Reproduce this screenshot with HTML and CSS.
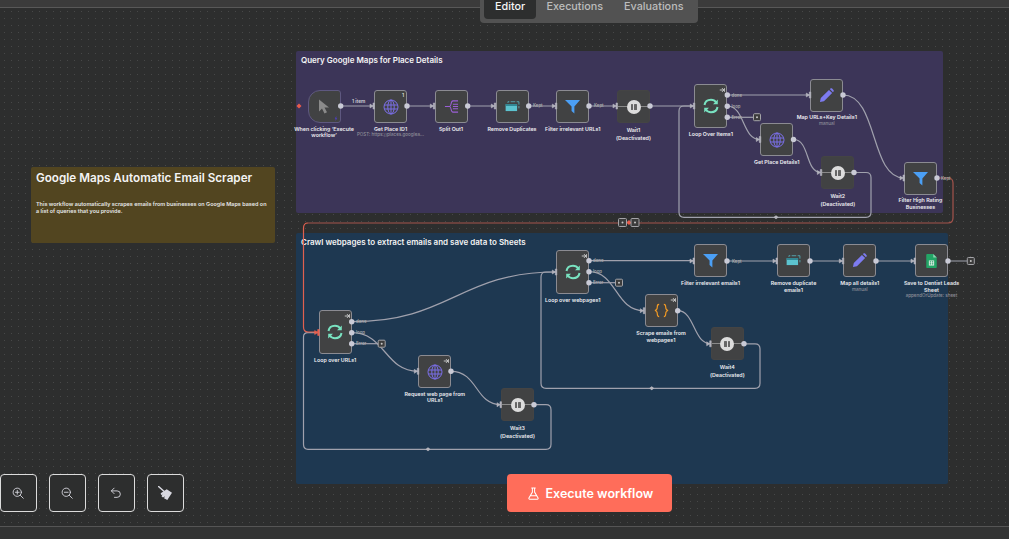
FILE: index.html
```html
<!DOCTYPE html>
<html lang="en">
<head>
<meta charset="utf-8">
<title>Workflow editor</title>
<link rel="stylesheet" href="styles.css">
</head>
<body>
<svg class="defs" width="0" height="0" aria-hidden="true">
  <defs>
    <symbol id="i-globe" viewBox="0 0 16 16"><g fill="none" stroke="currentColor" stroke-width="1"><circle cx="8" cy="8" r="7"/><ellipse cx="8" cy="8" rx="3.2" ry="7"/><path d="M8 1v14M1.2 6h13.6M1.2 10h13.6"/></g></symbol>
    <symbol id="i-filter" viewBox="0 0 16 16"><path fill="currentColor" d="M0 1h16L10 8v7.500L7 12.800V8z"/></symbol>
    <symbol id="i-pencil" viewBox="0 0 16 16"><path fill="currentColor" d="M1 15l.9-4.300L10.600 2l3.400 3.400-8.700 8.700zM11.500 1.100l.8-.6c.5-.4 1.200-.4 1.700.1l1.400 1.400c.5.500.5 1.200.1 1.700l-.6.800z"/></symbol>
    <symbol id="i-loop" viewBox="0 0 16 16"><g fill="none" stroke="currentColor" stroke-width="2"><path d="M1.500 7C2 3.800 4.500 1.800 8 1.800c2.300 0 4.100 1 5.200 2.700"/><path d="M14.500 9c-.5 3.200-3 5.200-6.500 5.200-2.300 0-4.100-1-5.200-2.700"/></g><path fill="currentColor" d="M14.800 1.500v4.800h-4.800zM1.200 14.500V9.700h4.800z"/></symbol>
    <symbol id="i-run" viewBox="0 0 8 8"><path fill="none" stroke="currentColor" stroke-width="1" d="M1 4h5M4 1.500L6.500 4 4 6.500M7.500 1.500v5"/></symbol>
  </defs>
</svg>

<div class="app">
  <header class="topbar"></header>

  <section class="sticky sticky-purple"><h2 class="sticky-title">Query Google Maps for Place Details</h2></section>
  <section class="sticky sticky-blue"><h2 class="sticky-title">Crawl webpages to extract emails and save data to Sheets</h2></section>
  <section class="sticky sticky-yellow">
    <h1 class="note-title">Google Maps Automatic Email Scraper</h1>
    <p class="note-text">This workflow automatically scrapes emails from businesses on Google Maps based on a list of queries that you provide.</p>
  </section>

  <svg class="edges" viewBox="0 0 1009 539" width="1009" height="539">
    <g class="edge">
      <path d="M341 106H374M407 106H434M468 106H495M529 106H556M589 106H617M650 106H694"/>
      <path d="M727 95H810"/>
      <path d="M727 106C745 106 742 139.500 760 139.500"/>
      <path d="M727 117.300H753"/>
      <path d="M793.500 139.500C810 139.500 805 172.500 821 172.500"/>
      <path d="M854 172.500H866Q871 172.500 871 177.500V212.300Q871 217.300 866 217.300H684Q679 217.300 679 212.300V111Q679 106 684 106H694"/>
      <path d="M843 95C878 95 870 178 904 178"/>
      <path d="M352 321.700C450 321.700 460 272 556 272"/>
      <path d="M352 332.700C385 332.700 385 371.300 418 371.300"/>
      <path d="M352 343.700H378"/>
      <path d="M451 371.300C478 371.300 475 404.700 501 404.700"/>
      <path d="M534 404.700H546Q551 404.700 551 409.700V444.300Q551 449.300 546 449.300H308Q303.500 449.300 303.500 444.300V337Q303.500 332.700 308 332.700H318"/>
      <path d="M589 260.700H694"/>
      <path d="M589 271.700C617 271.700 615 310.700 644 310.700"/>
      <path d="M589 282.700H615"/>
      <path d="M677.700 310.700C695 310.700 693 343.800 711 343.800"/>
      <path d="M744 343.800H755Q760 343.800 760 348.800V383.300Q760 388.300 755 388.300H546Q541 388.300 541 383.300V277Q541 272 546 272H556"/>
      <path d="M727 261H777M810 261H843M876 261H915M948 261H967"/>
    </g>
    <path class="edge-red-dim" d="M937 178H948Q953 178 953 183V218Q953 223 948 223H308"/>
    <path class="edge-red" d="M308 223Q303.500 223 303.500 228V327Q303.500 332 308 332H318"/>

    <g class="marks">
      <path d="M776 215.300l2.500 2-2.500 2-2.500-2zM428 447.300l2.500 2-2.500 2-2.500-2zM651.700 386.300l2.500 2-2.500 2-2.500-2z"/>
    </g>
    <path class="mark-red" d="M299 103.500l2.500 2.500-2.500 2.500-2.500-2.500zM629 220l2.500 2.500-2.500 2.500-2.500-2.500z"/>

    <g class="edge-text">
      <text class="t-item" x="352" y="103">1 item</text>
      <text x="731.500" y="96.500">done</text><text x="731.500" y="107.500">loop</text><text x="731.500" y="118.800">Error</text>
      <text x="533" y="107">Kept</text><text x="594" y="107">Kept</text><text x="941" y="179.500">Kept</text>
      <text x="356" y="323">done</text><text x="356" y="334">loop</text><text x="356" y="345">Error</text>
      <text x="593" y="262">done</text><text x="593" y="273">loop</text><text x="593" y="284">Error</text>
      <text x="732" y="262.500">Kept</text>
    </g>

    <g class="plus-boxes">
      <rect x="753.500" y="113.700" width="7" height="7" rx="1"/>
      <rect x="378.200" y="340.200" width="7" height="7" rx="1"/>
      <rect x="615.500" y="279.200" width="7" height="7" rx="1"/>
      <rect x="967.300" y="257.500" width="7" height="7" rx="1"/>
      <rect x="618.500" y="218.500" width="8" height="8" rx="1"/>
      <rect x="631" y="218.500" width="8" height="8" rx="1"/>
    </g>
    <g class="plus-dots">
      <circle cx="757" cy="117.200" r="1"/><circle cx="381.700" cy="343.700" r="1"/><circle cx="619" cy="282.700" r="1"/><circle cx="970.800" cy="261" r="1"/><circle cx="622.500" cy="222.500" r="1"/><circle cx="635" cy="222.500" r="1"/>
    </g>
  </svg>

  <article class="node n1">
    <div class="box box-trigger">
      <svg class="icon-cursor" viewBox="0 0 12 16"><path d="M1 1v12l3-3 2.500 5 2.500-1.200L6.500 9H11z"/></svg>
      <svg class="bolt" viewBox="0 0 6 8"><path d="M3.500 0L1 4.500h1.500L2 8l3-4.500H3.500z"/></svg>
    </div>
    <p class="label">When clicking ‘Execute<br>workflow’</p>
  </article>

  <article class="node n2">
    <div class="box"><svg class="icon icon-globe"><use href="#i-globe"/></svg><span class="count">1</span></div>
    <p class="label">Get Place ID1</p><p class="sub">POST: https://places.googlea...</p>
  </article>

  <article class="node n3">
    <div class="box">
      <svg class="icon icon-split" viewBox="0 0 16 16"><path d="M1 8h5M6 8c2 0 1-6 3.500-6H15M6 8c2 0 1 6 3.500 6H15M9.500 5.500H15M9.500 8H15M9.500 10.500H15" fill="none" stroke="currentColor" stroke-width="1.100"/></svg>
    </div>
    <p class="label">Split Out1</p>
  </article>

  <article class="node n4">
    <div class="box">
      <svg class="icon icon-dedupe" viewBox="0 0 16 12"><path d="M3 2V.8h1.500M6 .8h5M12.500.8H15V4M15 5.500V8" fill="none" stroke="currentColor" stroke-width=".8"/><rect x="0.500" y="3.500" width="12.500" height="7.500" fill="currentColor"/><rect x="0.500" y="3.500" width="12.500" height="1.800" fill="#2d7f8c"/></svg>
    </div>
    <p class="label">Remove Duplicates</p>
  </article>

  <article class="node n5">
    <div class="box"><svg class="icon icon-filter"><use href="#i-filter"/></svg></div>
    <p class="label">Filter irrelevant URLs1</p>
  </article>

  <article class="node n6 off">
    <div class="box box-off"><span class="pause"></span></div>
    <p class="label label-off">Wait1<br>(Deactivated)</p>
  </article>

  <article class="node n7">
    <div class="box box-loop"><svg class="icon icon-loop"><use href="#i-loop"/></svg><svg class="run"><use href="#i-run"/></svg></div>
    <p class="label">Loop Over Items1</p>
  </article>

  <article class="node n8">
    <div class="box"><svg class="icon icon-pencil"><use href="#i-pencil"/></svg></div>
    <p class="label">Map URLs+Key Details1</p><p class="sub">manual</p>
  </article>

  <article class="node n9">
    <div class="box"><svg class="icon icon-globe"><use href="#i-globe"/></svg></div>
    <p class="label">Get Place Details1</p>
  </article>

  <article class="node n10 off">
    <div class="box box-off"><span class="pause"></span></div>
    <p class="label label-off">Wait2<br>(Deactivated)</p>
  </article>

  <article class="node n11">
    <div class="box"><svg class="icon icon-filter"><use href="#i-filter"/></svg></div>
    <p class="label">Filter High Rating<br>Businesses</p>
  </article>

  <article class="node n12">
    <div class="box box-loop"><svg class="icon icon-loop"><use href="#i-loop"/></svg><svg class="run"><use href="#i-run"/></svg></div>
    <p class="label">Loop over URLs1</p>
  </article>

  <article class="node n13">
    <div class="box"><svg class="icon icon-globe"><use href="#i-globe"/></svg><svg class="run"><use href="#i-run"/></svg></div>
    <p class="label">Request web page from<br>URLs1</p>
  </article>

  <article class="node n14 off">
    <div class="box box-off"><span class="pause"></span></div>
    <p class="label label-off">Wait3<br>(Deactivated)</p>
  </article>

  <article class="node n15">
    <div class="box box-loop"><svg class="icon icon-loop"><use href="#i-loop"/></svg><svg class="run"><use href="#i-run"/></svg></div>
    <p class="label">Loop over webpages1</p>
  </article>

  <article class="node n16">
    <div class="box">
      <svg class="icon icon-code" viewBox="0 0 16 16"><path d="M5.500 1.500C3.500 1.500 3.500 2.500 3.500 4.500S3.500 7.500 1 8c2.500.5 2.500 1.500 2.500 3.500s0 3 2 3M10.500 1.500c2 0 2 1 2 3s0 3 2.500 3.500c-2.500.5-2.500 1.500-2.500 3.500s0 3-2 3" fill="none" stroke="currentColor" stroke-width="1.200"/></svg>
      <svg class="run"><use href="#i-run"/></svg>
    </div>
    <p class="label">Scrape emails from<br>webpages1</p>
  </article>

  <article class="node n17 off">
    <div class="box box-off"><span class="pause"></span></div>
    <p class="label label-off">Wait4<br>(Deactivated)</p>
  </article>

  <article class="node n18">
    <div class="box"><svg class="icon icon-filter"><use href="#i-filter"/></svg></div>
    <p class="label">Filter irrelevant emails1</p>
  </article>

  <article class="node n19">
    <div class="box">
      <svg class="icon icon-dedupe" viewBox="0 0 16 12"><path d="M3 2V.8h1.500M6 .8h5M12.500.8H15V4M15 5.500V8" fill="none" stroke="currentColor" stroke-width=".8"/><rect x="0.500" y="3.500" width="12.500" height="7.500" fill="currentColor"/><rect x="0.500" y="3.500" width="12.500" height="1.800" fill="#2d7f8c"/></svg>
    </div>
    <p class="label">Remove duplicate<br>emails1</p>
  </article>

  <article class="node n20">
    <div class="box"><svg class="icon icon-pencil"><use href="#i-pencil"/></svg></div>
    <p class="label">Map all details1</p><p class="sub">manual</p>
  </article>

  <article class="node n21">
    <div class="box">
      <svg class="icon icon-sheet" viewBox="0 0 12 16"><path fill="#23a566" d="M1.200 0H8l4 4v10.800c0 .7-.5 1.200-1.200 1.200H1.200C.5 16 0 15.500 0 14.800V1.200C0 .5.500 0 1.200 0z"/><path fill="#8ed1b1" d="M8 0l4 4H8z"/><path fill="#f1f1f1" d="M3 7.500h6V13H3zm.9.900v1.400h1.700V8.400zm2.500 0v1.400h1.700V8.400zM3.900 10.600v1.500h1.700v-1.500zm2.500 0v1.500h1.700v-1.500z" fill-rule="evenodd"/></svg>
    </div>
    <p class="label">Save to Dentist Leads<br>Sheet</p><p class="sub">appendOrUpdate: sheet</p>
  </article>

  <svg class="ports" viewBox="0 0 1009 539" width="1009" height="539">
    <g class="inputs">
      <path d="M370 104v4l3 -2zM430.300 104v4l3-2zM491.300 104v4l3-2zM552.300 104v4l3-2zM613 104v4l3-2zM690.300 104v4l3-2zM806.300 93v4l3-2zM756.300 137.500v4l3-2zM817.300 170.500v4l3-2zM900 176v4l3-2zM552.300 270v4l3-2zM414.300 369.300v4l3-2zM497 402.700v4l3-2zM640.300 308.700v4l3-2zM706.700 341.800v4l3-2zM690 259v4l3-2zM773 259v4l3-2zM839.300 259v4l3-2zM911 259v4l3-2z"/>
      <path d="M373 103h1.500v6H373zM433.300 103h1.500v6h-1.500zM494.300 103h1.500v6h-1.500zM555.300 103h1.500v6h-1.500zM616 103h1.500v6H616zM693.300 103h1.500v6h-1.500zM809.300 92h1.500v6h-1.500zM759.300 136.500h1.500v6h-1.500zM820.300 169.500h1.500v6h-1.500zM903 175h1.500v6H903zM555.300 269h1.500v6h-1.500zM417.300 368.300h1.500v6h-1.500zM500 401.700h1.500v6H500zM643.300 307.700h1.500v6h-1.500zM709.700 340.800h1.500v6h-1.500zM693 258h1.500v6H693zM776 258h1.500v6H776zM842.300 258h1.500v6h-1.500zM914 258h1.500v6H914z"/>
    </g>
    <path class="input-red" d="M314.700 330.500v4l3-2zM317.700 329.500h1.500v6h-1.500z"/>
    <g class="outputs">
      <circle cx="340.700" cy="106" r="2.700"/><circle cx="407" cy="106" r="2.700"/><circle cx="467.700" cy="106" r="2.700"/><circle cx="528.700" cy="106" r="2.700"/><circle cx="589" cy="106" r="2.700"/><circle cx="650" cy="106" r="2.700"/>
      <circle cx="727.300" cy="95" r="2.700"/><circle cx="727.300" cy="106.300" r="2.700"/><circle cx="727.300" cy="117.300" r="2.700"/>
      <circle cx="843" cy="95" r="2.700"/><circle cx="793.500" cy="139.500" r="2.700"/><circle cx="854" cy="172.500" r="2.700"/><circle cx="937" cy="178" r="2.700"/>
      <circle cx="351.700" cy="321.700" r="2.700"/><circle cx="351.700" cy="332.700" r="2.700"/><circle cx="351.700" cy="343.700" r="2.700"/>
      <circle cx="451" cy="371.300" r="2.700"/><circle cx="534" cy="404.700" r="2.700"/>
      <circle cx="589" cy="260.700" r="2.700"/><circle cx="589" cy="271.700" r="2.700"/><circle cx="589" cy="282.700" r="2.700"/>
      <circle cx="677.700" cy="310.700" r="2.700"/><circle cx="744" cy="343.800" r="2.700"/>
      <circle cx="727" cy="261" r="2.700"/><circle cx="810" cy="261" r="2.700"/><circle cx="876" cy="261" r="2.700"/><circle cx="948" cy="261" r="2.700"/>
    </g>
  </svg>

  <nav class="tabs">
    <span class="tab tab-active">Editor</span>
    <span class="tab">Executions</span>
    <span class="tab">Evaluations</span>
  </nav>

  <div class="controls">
    <button class="ctl" type="button" aria-label="Zoom in">
      <svg viewBox="0 0 16 16"><g fill="none" stroke="currentColor" stroke-width="1.200" stroke-linecap="round"><circle cx="7" cy="7" r="5.500"/><path d="M11.200 11.200L15 15M7 4.500v5M4.500 7h5"/></g></svg>
    </button>
    <button class="ctl" type="button" aria-label="Zoom out">
      <svg viewBox="0 0 16 16"><g fill="none" stroke="currentColor" stroke-width="1.200" stroke-linecap="round"><circle cx="7" cy="7" r="5.500"/><path d="M11.200 11.200L15 15M4.500 7h5"/></g></svg>
    </button>
    <button class="ctl" type="button" aria-label="Undo">
      <svg viewBox="0 0 16 16"><path d="M5.500 1.500L1.800 5.200l3.700 3.700M2 5.200h7.500a4.300 4.300 0 010 8.600H6" fill="none" stroke="currentColor" stroke-width="1.200" stroke-linecap="round" stroke-linejoin="round"/></svg>
    </button>
    <button class="ctl" type="button" aria-label="Tidy up">
      <svg class="broom" viewBox="0 0 14 14"><path d="M.5.500l6 5.200" fill="none" stroke="currentColor" stroke-width="1.500" stroke-linecap="round"/><path fill="currentColor" d="M2.700 7.300L8.700 3.300 14 6.700 9.300 14 6 12.300l1-2-2 1.200-1.500-1.300 1-1.700-1.400.5z"/></svg>
    </button>
  </div>

  <button class="execute" type="button">
    <svg viewBox="0 0 12 14"><path d="M4 1h4M4.800 1v4.500L1 12c-.3.600.1 1.200.8 1.200h8.400c.7 0 1.100-.6.800-1.200L7.200 5.500V1M2.800 9.500h6.400" fill="none" stroke="currentColor" stroke-width="1.100" stroke-linecap="round" stroke-linejoin="round"/></svg>
    <span>Execute workflow</span>
  </button>

  <footer class="bottombar"></footer>
</div>
</body>
</html>
```

FILE: styles.css
```css
* { box-sizing: border-box; }
html, body { margin: 0; padding: 0; }
body { background: #2d2e2e; font-family: Inter, "Liberation Sans", sans-serif; overflow: hidden; }
.defs { position: absolute; }

.app {
  position: relative;
  width: 1009px;
  height: 539px;
  display: flex;
  flex-direction: column;
  justify-content: space-between;
  overflow: hidden;
  background-color: #2d2e2e;
  background-image: radial-gradient(circle, #474848 0.6px, transparent 0.9px);
  background-size: 7px 7px;
  background-position: 1px 1px;
}

.topbar { height: 8px; background: #3b3b3b; border-bottom: 1px solid #585858; }
.bottombar { height: 13px; background: #323333; border-top: 1px solid #555; }

/* stickies */
.sticky { position: absolute; border-radius: 2px; color: #f4f4f4; }
.sticky-purple { left: 296px; top: 51px; width: 647px; height: 162px; background: #3c3558; padding: 4px 5px; }
.sticky-blue { left: 296px; top: 233px; width: 652px; height: 251px; background: #1e3851; padding: 4px 5px; }
.sticky-yellow { left: 31px; top: 167px; width: 244px; height: 76px; background: #524520; padding: 4px 5px; }
.sticky-title { margin: 0; font-size: 8px; line-height: 10px; font-weight: 600; }
.note-title { margin: 0; font-size: 11.700px; line-height: 15px; font-weight: 600; }
.note-text { margin: 15px 0 0; font-size: 5.480px; line-height: 7.200px; font-weight: 600; color: #e6e6e6; }

/* edge layers */
.edges, .ports { position: absolute; left: 0; top: 0; }
.ports { pointer-events: none; }
.edge path { fill: none; stroke: #a0a1ad; stroke-width: 1.200; }
.edge-red-dim { fill: none; stroke: #a5544c; stroke-width: 1.200; }
.edge-red { fill: none; stroke: #e0604f; stroke-width: 1.200; }
.marks path { fill: #b5b5bd; }
.mark-red { fill: #e85c4c; }
.edge-text text { font-size: 4.300px; font-weight: 600; fill: #a9a9ac; }
.edge-text .t-item { font-size: 4.800px; fill: #d2d2d8; }
.plus-boxes rect { fill: #3c3c3c; stroke: #a4a4a8; stroke-width: 1; }
.plus-dots circle { fill: #c7c7c7; }
.inputs path { fill: #b3b3bd; stroke: #b3b3bd; stroke-width: .6; }
.input-red { fill: #e8604f; stroke: #e8604f; stroke-width: .6; }
.outputs circle { fill: #c9cad6; }

/* nodes */
.node { position: absolute; width: 33px; display: flex; flex-direction: column; align-items: center; }
.box {
  position: relative;
  width: 33px;
  height: 33px;
  display: flex;
  align-items: center;
  justify-content: center;
  flex: none;
  background: #414243;
  border: 1px solid #8b8b92;
  border-radius: 3px;
}
.box-loop { height: 44px; }
.box-off { border-color: #444; }
.box-off::before { content: ""; position: absolute; left: 0; right: 0; top: 50%; height: 1px; margin-top: -.5px; background: #8a8a8a; }
.box-trigger { border-radius: 12px 3px 3px 12px; border-color: #5e5880; }
.label {
  margin: 2.500px 0 0;
  font-size: 5.300px;
  line-height: 6.800px;
  font-weight: 600;
  color: #ececf0;
  text-align: center;
  white-space: nowrap;
}
.label-off { line-height: 8px; }
.sub { margin: 0; font-size: 4.500px; line-height: 6.500px; font-weight: 500; color: #8f8f99; white-space: nowrap; }

.n1 { left: 307.500px; top: 90px; }
.n2 { left: 374px; top: 90px; }
.n3 { left: 434.500px; top: 90px; }
.n4 { left: 495.500px; top: 90px; }
.n5 { left: 556.300px; top: 90px; }
.n6 { left: 617px; top: 90px; }
.n7 { left: 694.300px; top: 84.300px; }
.n8 { left: 810.300px; top: 78.700px; }
.n9 { left: 760.300px; top: 123.300px; }
.n10 { left: 821.300px; top: 156.300px; }
.n11 { left: 904px; top: 161.700px; }
.n12 { left: 318.700px; top: 310.300px; }
.n13 { left: 418.300px; top: 355px; }
.n14 { left: 501px; top: 388.300px; }
.n15 { left: 556.300px; top: 250.300px; }
.n16 { left: 644.500px; top: 294.300px; }
.n17 { left: 710.800px; top: 327.300px; }
.n18 { left: 694px; top: 244.300px; }
.n19 { left: 777px; top: 244.300px; }
.n20 { left: 843.300px; top: 244.300px; }
.n21 { left: 915px; top: 244.300px; }

/* node icons */
.icon { display: block; flex: none; }
.icon-globe { width: 16px; height: 16px; color: #7b6fe8; }
.icon-filter { width: 15px; height: 15px; color: #4b9ff5; }
.icon-pencil { width: 15px; height: 15px; color: #7d7bf0; }
.icon-loop { width: 16px; height: 16px; color: #79e2c0; }
.icon-split { width: 15px; height: 15px; color: #9a5fd6; }
.icon-dedupe { width: 15px; height: 11px; color: #5cc3cf; }
.icon-code { width: 15px; height: 15px; color: #f59b23; }
.icon-sheet { width: 11px; height: 14px; }
.icon-cursor { width: 12px; height: 17px; fill: #8a8a8a; margin-left: -1px; }
.bolt { position: absolute; right: 2px; bottom: 1px; width: 4px; height: 5px; fill: #4f3fbf; }
.run { position: absolute; right: 1px; top: 2px; width: 6px; height: 6px; color: #f2f2f2; }
.count { position: absolute; right: 2px; top: 1px; font-size: 5px; line-height: 6px; font-weight: 600; color: #dcdcdc; }
.pause { position: relative; width: 14px; height: 14px; border-radius: 50%; background: #dcdcdc; display: flex; align-items: center; justify-content: center; gap: 1px; }
.pause::before, .pause::after { content: ""; width: 2.500px; height: 6px; background: #666; border-radius: .5px; }

/* tabs */
.tabs {
  position: absolute;
  left: 480px;
  top: 0;
  width: 218px;
  height: 23px;
  padding: 0 4px;
  display: flex;
  background: #525252;
  border-radius: 0 0 4px 4px;
}
.tab { height: 19px; padding: 0 10.500px; font-size: 10.800px; line-height: 13px; font-weight: 500; color: #bdbdbd; white-space: nowrap; }
.tab-active { width: 52px; padding: 0 11px; background: #2d2e2e; color: #f5f5f5; border-radius: 0 0 4px 4px; }

/* controls */
.controls { position: absolute; left: -.5px; top: 474px; display: flex; gap: 11.500px; }
.ctl {
  width: 37.500px;
  height: 38px;
  padding: 0;
  display: flex;
  align-items: center;
  justify-content: center;
  background: #2d2e2e;
  border: 1px solid #dcdcdc;
  border-radius: 4px;
  color: #d8d8e0;
}
.ctl svg { width: 12px; height: 12px; }
.ctl .broom { width: 14px; height: 14px; }

/* execute */
.execute {
  position: absolute;
  left: 506.500px;
  top: 474px;
  width: 165px;
  height: 38px;
  padding: 0 0 0 21px;
  display: flex;
  align-items: center;
  gap: 7px;
  background: #ff6d5a;
  border: 0;
  border-radius: 4px;
  color: #fff;
  font-family: inherit;
  font-size: 12.500px;
  font-weight: 600;
}
.execute svg { width: 11px; height: 13px; }
```
